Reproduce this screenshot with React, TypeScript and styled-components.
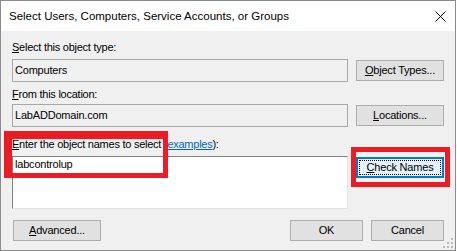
import styled, { createGlobalStyle } from "styled-components";

const GlobalStyle = createGlobalStyle`
  html, body {
    margin: 0;
    padding: 0;
    background: #ffffff;
  }
  body {
    font-family: "Liberation Sans", Arial, sans-serif;
    color: #000000;
  }
`;

const Dialog = styled.div`
  position: relative;
  box-sizing: border-box;
  width: 456px;
  height: 251px;
  border: 1px solid #8a8a8a;
  background: #f0f0f0;
  display: flex;
  flex-direction: column;
`;

const TitleBar = styled.div`
  height: 30px;
  flex: none;
  background: #ffffff;
  display: flex;
  align-items: center;
  justify-content: space-between;
  padding: 0 8px 0 8px;
`;

const Title = styled.span`
  font-size: 11.5px;
  line-height: 14px;
`;

const CloseIcon = styled.svg`
  width: 11px;
  height: 11px;
  margin-right: 1px;
`;

const Body = styled.div`
  flex: 1;
  padding: 10px 11px 0 11px;
  display: flex;
  flex-direction: column;
`;

const Label = styled.div<{ $top?: number; $gap: number }>`
  font-size: 11px;
  line-height: 13px;
  letter-spacing: -0.25px;
  margin-top: ${p => p.$top ?? 0}px;
  margin-bottom: ${p => p.$gap}px;
  white-space: nowrap;
`;

const Link = styled.a`
  color: #0066cc;
  text-decoration: underline;
`;

const FieldRow = styled.div<{ $align?: string }>`
  display: flex;
  align-items: ${p => p.$align ?? "center"};
  gap: 8px;
`;

const ReadOnlyField = styled.div`
  box-sizing: border-box;
  width: 336px;
  height: 23px;
  border: 1px solid #a8a8a8;
  padding: 1px 0 0 2px;
  font-size: 11px;
  line-height: 19px;
  letter-spacing: -0.2px;
`;

const NamesBox = styled.div`
  box-sizing: border-box;
  width: 336px;
  height: 53px;
  background: #ffffff;
  border-top: 1px solid #828282;
  border-left: 1px solid #828282;
  border-right: 1px solid #e3e3e3;
  border-bottom: 1px solid #e3e3e3;
  padding: 1px 0 0 2px;
  font-size: 11px;
  line-height: 13px;
  letter-spacing: -0.2px;
`;

const Button = styled.div<{ $w?: number; $focused?: boolean }>`
  position: relative;
  box-sizing: border-box;
  width: ${p => p.$w ?? 88}px;
  height: 21px;
  flex: none;
  background: ${p => (p.$focused ? "#e5f1fb" : "#e1e1e1")};
  border: 1px solid ${p => (p.$focused ? "#0078d7" : "#adadad")};
  font-size: 11px;
  line-height: 19px;
  letter-spacing: -0.2px;
  text-align: center;
  ${p =>
    p.$focused &&
    `
    box-shadow: inset 0 0 0 1px #0078d7;
    &::after {
      content: "";
      position: absolute;
      inset: 2px;
      border: 1px dotted #000000;
    }
  `}
`;

const CheckButton = styled(Button)`
  margin-top: 1px;
`;

const Footer = styled.div`
  display: flex;
  align-items: center;
  gap: 8px;
  margin-top: 11px;
`;

const AdvancedButton = styled(Button)`
  margin-left: 1px;
  margin-right: auto;
`;

const RedFrame = styled.div<{ $x: number; $y: number; $w: number; $h: number; $bw: string }>`
  position: absolute;
  box-sizing: border-box;
  left: ${p => p.$x}px;
  top: ${p => p.$y}px;
  width: ${p => p.$w}px;
  height: ${p => p.$h}px;
  border-style: solid;
  border-color: #ed1c24;
  border-width: ${p => p.$bw};
  pointer-events: none;
`;

const Gripper = styled.svg`
  position: absolute;
  right: 2px;
  bottom: 2px;
  width: 10px;
  height: 10px;
`;

export default function App() {
  return (
    <>
      <GlobalStyle />
      <Dialog>
        <TitleBar>
          <Title>Select Users, Computers, Service Accounts, or Groups</Title>
          <CloseIcon viewBox="0 0 11 11">
            <path d="M0.5 0.5 L10.5 10.5 M10.5 0.5 L0.5 10.5" stroke="#000" strokeWidth="1" fill="none" />
          </CloseIcon>
        </TitleBar>
        <Body>
          <Label $gap={5}>
            <u>S</u>elect this object type:
          </Label>
          <FieldRow>
            <ReadOnlyField>Computers</ReadOnlyField>
            <Button>
              <u>O</u>bject Types...
            </Button>
          </FieldRow>
          <Label $top={6} $gap={3}>
            <u>F</u>rom this location:
          </Label>
          <FieldRow>
            <ReadOnlyField>LabADDomain.com</ReadOnlyField>
            <Button>
              <u>L</u>ocations...
            </Button>
          </FieldRow>
          <Label $top={11} $gap={5}>
            <u>E</u>nter the object names to select (<Link>examples</Link>):
          </Label>
          <FieldRow $align="flex-start">
            <NamesBox>labcontrolup</NamesBox>
            <CheckButton $focused>
              <u>C</u>heck Names
            </CheckButton>
          </FieldRow>
          <Footer>
            <AdvancedButton>
              <u>A</u>dvanced...
            </AdvancedButton>
            <Button $w={73}>OK</Button>
            <Button $w={73}>Cancel</Button>
          </Footer>
        </Body>
        <RedFrame $x={3} $y={130} $w={164} $h={47} $bw="8px 5px 5px 8px" />
        <RedFrame $x={350} $y={146} $w={99} $h={40} $bw="5px" />
        <Gripper viewBox="0 0 10 10">
          <rect x="8" y="0" width="2" height="2" fill="#bcbcbc" />
          <rect x="4" y="4" width="2" height="2" fill="#bcbcbc" />
          <rect x="8" y="4" width="2" height="2" fill="#bcbcbc" />
          <rect x="0" y="8" width="2" height="2" fill="#bcbcbc" />
          <rect x="4" y="8" width="2" height="2" fill="#bcbcbc" />
          <rect x="8" y="8" width="2" height="2" fill="#bcbcbc" />
        </Gripper>
      </Dialog>
    </>
  );
}
